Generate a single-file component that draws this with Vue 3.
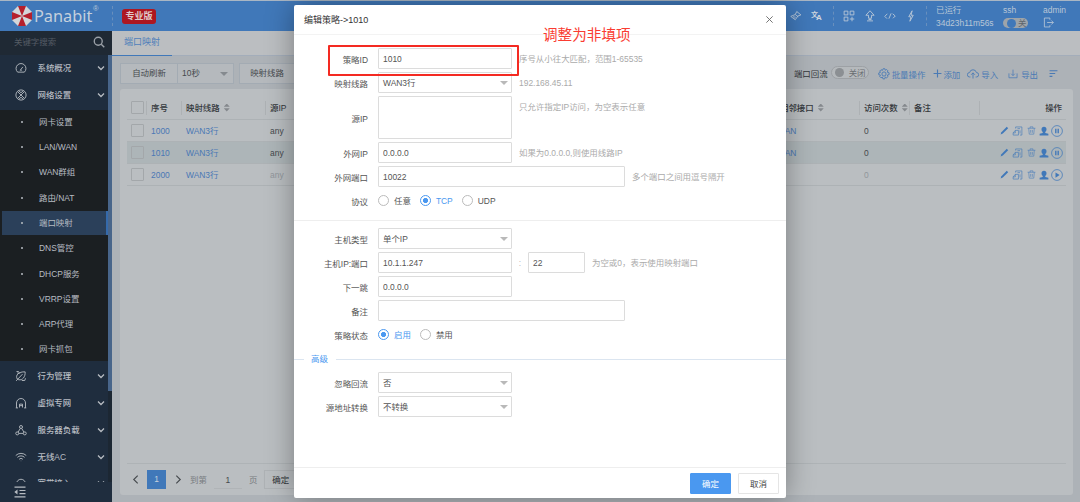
<script setup>
import {ref, reactive} from 'vue';

// 16x16 outline icons
const icons = {
  gauge: 'M3.5 13.5h9A6.6 6.6 0 1 0 3.5 13.5zM7 11l3.5-4.5M7 11h2',
  network: 'M8 1.2a6.8 6.8 0 1 0 0 13.6A6.8 6.8 0 0 0 8 1.2zM3.5 3.5l9 9M12.5 3.500l-9 9M5 2.300L8 5l3-2.700M5 13.700L8 11l3 2.700',
  behavior: 'M3 12C0 7 5 2 13.5 2.5C14 9 10 14 5 13zM1.5 14.5L10 5.5M3 4h4M2 2h3M9 14h4l1-3',
  vpn: 'M2 14.5V8a6 6 0 0 1 12 0v6.5M1 14.5h3M12 14.5h3M6 14V9.5h4V14M6 11.5h4',
  load: 'M8 2a2 2 0 1 0 0 4a2 2 0 0 0 0-4zM3 10.5a2 2 0 1 0 0 4a2 2 0 0 0 0-4zM13 10.5a2 2 0 1 0 0 4a2 2 0 0 0 0-4zM7 6l-3 5M9 6l3 5M5 12.5h6',
  wifi: 'M1 6a10 10 0 0 1 14 0M3.2 8.5a6.8 6.8 0 0 1 9.6 0M5.5 11a3.5 3.5 0 0 1 5 0M8 13v.5',
  access: 'M2 9a6 6 0 0 1 12 0M2 9v4h2V9zM14 9v4h-2V9z',
  clean: 'M9 2l5.5 4.5-4 1.5L7 13 1 8.5 7 6zM7 6l4 3M4 9.5l2-1M5.5 11l2-1.5',
  apps: 'M1.5 1.5h5v5h-5zM9.5 1.5h5v5h-5zM1.5 9.5h5v5h-5zM12 9v6M9 12h6',
  upload: 'M8 1L2.5 7H6v4h4V7h3.5zM4 14.5h8M6 12.7h4',
  code: 'M4.5 5L1 8.5l3 3M11.5 5L15 8l-3 3M6.5 11.5L9.5 4.5',
  bolt: 'M9.5 1L5 9h3l-1.5 6L11 7H8z',
  logout: 'M10 4V1.5H2v13h8V12M6 8h9M12 5l3 3-3 3',
  gear: 'M8 5.2a2.8 2.8 0 1 0 0 5.6a2.8 2.8 0 0 0 0-5.6zM6.8 1h2.4l.5 2 1.8-1 1.8 1.8-1 1.8 2.5.8v2.4l-2.4.7 1 1.8-1.8 1.8-1.9-1-.7 2.4H6.6l-.7-2.4-1.9 1-1.7-1.8 1-1.8L1 9V6.6l2.3-.8-1-1.8L4 2.3l1.9.9z',
  plus: 'M8 1v14M1 8h14',
  cloud: 'M4.5 12H3.5a3 3 0 0 1 0-6a4.6 4.6 0 0 1 9 0a3 3 0 0 1 0 6h-1M8 14V6.5M5.5 9L8 6.5 10.5 9',
  download: 'M1.5 7v7h13V7M8 1v9.5M5 7.5l3 3 3-3',
  sort: 'M1 3h14M1 8h10M1 13h5',
  copy: 'M5 4V1.5h10v13h-3M1 14.5h8.500V7H4.500L1 11zM4.5 7v4H1M8 4.200h4M12 7v5',
  trash: 'M1 4h14M5.5 4V1.5h5V4M3 4l1 10.5h8L13 4M6.5 7v5M9.5 7v5',
};

const topIcons = ['apps', 'upload', 'code', 'bolt'];

const mainMenu = [
  {name: '系统概况', icon: 'gauge'},
  {name: '网络设置', icon: 'network'},
];
const subMenu = ['网卡设置', 'LAN/WAN', 'WAN群组', '路由/NAT', '端口映射', 'DNS管控', 'DHCP服务', 'VRRP设置', 'ARP代理', '网卡抓包'];
const restMenu = [
  {name: '行为管理', icon: 'behavior'},
  {name: '虚拟专网', icon: 'vpn'},
  {name: '服务器负载', icon: 'load'},
  {name: '无线AC', icon: 'wifi'},
  {name: '宽带接入', icon: 'access'},
];
const activeMenu = ref('端口映射');

const tools = [
  {name: '批量操作', icon: 'gear'},
  {name: '添加', icon: 'plus'},
  {name: '导入', icon: 'cloud'},
  {name: '导出', icon: 'download'},
];

const rows = ref([
  {id: 1000, line: 'WAN3行', src: 'any', port: 'LAN', count: 0, enabled: true},
  {id: 1010, line: 'WAN3行', src: 'any', port: 'LAN', count: 0, enabled: true},
  {id: 2000, line: 'WAN3行', src: 'any', port: '', count: 0, enabled: false},
]);

const form = reactive({
  id: '1010',
  line: 'WAN3行',
  srcIp: '',
  wanIp: '0.0.0.0',
  wanPort: '10022',
  protocol: 'TCP',
  hostType: '单个IP',
  hostIp: '10.1.1.247',
  hostPort: '22',
  nextHop: '0.0.0.0',
  remark: '',
  state: '启用',
  ignore: '否',
  snat: '不转换',
});

const showModal = ref(true);
const closeModal = () => {
  showModal.value = false;
};
</script>

<template>
  <div class="page">
    <header class="header">
      <div class="brand">
        <svg class="logo" viewBox="0 0 20 20">
          <path fill="#d3d6d9" d="M6 0h8l6 6v8l-6 6H6l-6-6V6z"/>
          <path fill="#b5202c" d="M6 0h8l-4 10zM20 6v8l-10-4zM14 20H6l4-10zM0 14V6l10 4z"/>
        </svg>
        <span class="brand-name">Panabit</span>
        <span class="reg">®</span>
      </div>
      <span class="edition">专业版</span>
      <div class="header-right">
        <svg class="ico clean" viewBox="0 0 16 16"><path :d="icons.clean"/></svg>
        <span class="translate"><b>文</b><b class="letter">A</b></span>
        <div class="top-icons">
          <svg v-for="name in topIcons" :key="name" class="ico" viewBox="0 0 16 16"><path :d="icons[name]"/></svg>
        </div>
        <div class="uptime">
          <span>已运行</span>
          <span>34d23h11m56s</span>
        </div>
        <div class="ssh">
          <span>ssh</span>
          <span class="mini-switch"><i></i>关</span>
        </div>
        <div class="user">
          <span>admin</span>
          <svg class="ico" viewBox="0 0 16 16"><path :d="icons.logout"/></svg>
        </div>
      </div>
    </header>

    <div class="body">
      <aside class="sidebar">
        <div class="search">
          <span>关键字搜索</span>
          <svg viewBox="0 0 16 16"><circle cx="7" cy="7" r="5.3"/><path d="M11 11l4 4"/></svg>
        </div>
        <div class="menu-wrap">
          <nav class="menu">
            <div class="menu-item" v-for="item in mainMenu" :key="item.name">
              <svg class="ico" viewBox="0 0 16 16"><path :d="icons[item.icon]"/></svg>
              <span>{{ item.name }}</span>
              <svg class="chevron" viewBox="0 0 8 8"><path d="M1 2.5l3 3 3-3"/></svg>
            </div>
            <div class="submenu">
              <div v-for="name in subMenu"
                   :key="name"
                   :class="['sub-item', {active: name === activeMenu}]"
                   @click="activeMenu = name">
                <i></i>{{ name }}
              </div>
            </div>
            <div class="menu-item" v-for="item in restMenu" :key="item.name">
              <svg class="ico" viewBox="0 0 16 16"><path :d="icons[item.icon]"/></svg>
              <span>{{ item.name }}</span>
              <svg class="chevron" viewBox="0 0 8 8"><path d="M1 2.5l3 3 3-3"/></svg>
            </div>
          </nav>
          <div class="scrollbar"><div class="thumb"></div></div>
        </div>
        <div class="collapse">
          <svg viewBox="0 0 12 12"><path d="M.5 1.2h11M5.5 4.5h6M5.5 7.6h6M.5 10.8h11"/><path class="solid" d="M3.5 3.5v5L.3 6z"/></svg>
        </div>
      </aside>

      <main class="content">
        <div class="tabs"><div class="tab">端口映射</div></div>
        <div class="toolbar">
          <div class="group">
            <span class="cell">自动刷新</span>
            <span class="cell pick">10秒<i class="caret"></i></span>
          </div>
          <div class="group line-group"><span class="cell">映射线路</span></div>
          <div class="tools">
            <span class="dark">端口回流</span>
            <span class="switch"><i></i>关闭</span>
            <span v-for="tool in tools" :key="tool.name" :class="['tool', tool.icon]">
              <svg class="ico" viewBox="0 0 16 16"><path :d="icons[tool.icon]"/></svg>{{ tool.name }}
            </span>
            <svg class="ico sort-ico" viewBox="0 0 16 16"><path :d="icons.sort"/></svg>
          </div>
        </div>

        <div class="card">
          <div class="table">
            <div class="tr th">
              <span><i class="check"></i></span>
              <span>序号</span>
              <span>映射线路<i class="sorter"></i></span>
              <span>源IP</span>
              <span>相邻接口<i class="sorter"></i></span>
              <span>访问次数<i class="sorter"></i></span>
              <span>备注</span>
              <span class="right">操作</span>
            </div>
            <div v-for="row in rows" :key="row.id" :class="['tr', {current: row.id === 1010, off: !row.enabled}]">
              <span><i class="check"></i></span>
              <span class="link">{{ row.id }}</span>
              <span class="link">{{ row.line }}</span>
              <span>{{ row.src }}</span>
              <span class="link">{{ row.port }}</span>
              <span>{{ row.count }}</span>
              <span></span>
              <span class="actions">
                <svg class="fill" viewBox="0 0 16 16"><path d="M1 15l1.5-4L12 1.5 14.5 4 5 13.5z"/></svg>
                <svg class="thin copy" viewBox="0 0 16 16"><path :d="icons.copy"/></svg>
                <svg class="thin" viewBox="0 0 16 16"><path :d="icons.trash"/></svg>
                <svg class="fill person" viewBox="0 0 16 16"><path d="M8 1a4 4 0 0 1 4 4c0 2-1 3.5-2 4.5V11l5 1.5V15H1v-2.5L6 11V9.5C5 8.5 4 7 4 5a4 4 0 0 1 4-4z"/></svg>
                <svg class="round" viewBox="0 0 16 16">
                  <circle cx="8" cy="8" r="7.2"/>
                  <path v-if="row.enabled" d="M5.5 5h1.8v6H5.5zM8.7 5h1.8v6H8.7z"/>
                  <path v-else d="M6 4.5L11.5 8 6 11.5z"/>
                </svg>
              </span>
            </div>
          </div>
          <div class="pager">
            <svg class="arrow" viewBox="0 0 8 12"><path d="M6.5 1.5L2 6l4.5 4.5"/></svg>
            <span class="num">1</span>
            <svg class="arrow" viewBox="0 0 8 12"><path d="M1.5 1.5L6 6l-4.5 4.5"/></svg>
            <span class="muted goto">到第</span>
            <span class="page-input">1</span>
            <span class="muted">页</span>
            <span class="page-ok">确定</span>
          </div>
        </div>
      </main>
    </div>

    <div class="modal" v-if="showModal">
      <div class="modal-head">
        <span>编辑策略-&gt;1010</span>
        <svg viewBox="0 0 10 10" @click="closeModal"><path d="M1.5 1.5l7 7M8.5 1.5l-7 7"/></svg>
      </div>
      <div class="form">
        <div class="row">
          <label>策略ID</label>
          <input type="text" v-model="form.id"/>
          <span class="hint">序号从小往大匹配，范围1-65535</span>
        </div>
        <div class="row">
          <label>映射线路</label>
          <div class="select">{{ form.line }}<i class="caret"></i></div>
          <span class="hint">192.168.45.11</span>
        </div>
        <div class="row tall">
          <label>源IP</label>
          <textarea v-model="form.srcIp"></textarea>
          <span class="hint">只允许指定IP访问，为空表示任意</span>
        </div>
        <div class="row">
          <label>外网IP</label>
          <input type="text" v-model="form.wanIp"/>
          <span class="hint">如果为0.0.0.0,则使用线路IP</span>
        </div>
        <div class="row">
          <label>外网端口</label>
          <input class="wide" type="text" v-model="form.wanPort"/>
          <span class="hint">多个端口之间用逗号隔开</span>
        </div>
        <div class="row">
          <label>协议</label>
          <span v-for="p in ['任意', 'TCP', 'UDP']"
                :key="p"
                :class="['radio', {on: form.protocol === p}]"
                @click="form.protocol = p"><i></i>{{ p }}</span>
        </div>
        <div class="divider"></div>
        <div class="row">
          <label>主机类型</label>
          <div class="select">{{ form.hostType }}<i class="caret"></i></div>
        </div>
        <div class="row">
          <label>主机IP:端口</label>
          <input type="text" v-model="form.hostIp"/>
          <span class="colon">:</span>
          <input class="short" type="text" v-model="form.hostPort"/>
          <span class="hint">为空或0，表示使用映射端口</span>
        </div>
        <div class="row">
          <label>下一跳</label>
          <input type="text" v-model="form.nextHop"/>
        </div>
        <div class="row">
          <label>备注</label>
          <input class="wide" type="text" v-model="form.remark"/>
        </div>
        <div class="row">
          <label>策略状态</label>
          <span v-for="s in ['启用', '禁用']"
                :key="s"
                :class="['radio', {on: form.state === s}]"
                @click="form.state = s"><i></i>{{ s }}</span>
        </div>
        <div class="legend"><span>高级</span></div>
        <div class="row">
          <label>忽略回流</label>
          <div class="select">{{ form.ignore }}<i class="caret"></i></div>
        </div>
        <div class="row">
          <label>源地址转换</label>
          <div class="select">{{ form.snat }}<i class="caret"></i></div>
        </div>
      </div>
      <div class="modal-foot">
        <button type="button" class="btn primary" @click="closeModal">确定</button>
        <button type="button" class="btn" @click="closeModal">取消</button>
      </div>
      <div class="mark-box"></div>
      <div class="mark-text">调整为非填项</div>
    </div>
  </div>
</template>

<style>
  body {
    overflow: hidden;
  }
</style>

<style scoped>
  .page, .page * {
    box-sizing: border-box;
  }

  .page {
    position: relative;
    display: flex;
    flex-direction: column;
    width: 1080px;
    height: 502px;
    overflow: hidden;
    background: #adb2b7;
    font-family: "Liberation Sans", "Noto Sans CJK SC", sans-serif;
    font-size: 8.45px;
    line-height: 12px;
    color: #45494d;
    white-space: nowrap;
  }

  svg {
    display: block;
    flex: none;
    fill: none;
    stroke: currentColor;
  }

  i {
    display: block;
    flex: none;
  }

  .ico {
    width: 12px;
    height: 12px;
    stroke-width: 1.2;
  }

  .header {
    display: flex;
    align-items: center;
    flex: none;
    height: 31px;
    border-top: 1px solid #a9b6c4;
    background: #4078b9;
    color: #b9c7d7;
  }

  .brand {
    display: flex;
    align-items: center;
    width: 113px;
    height: 20px;
    padding-left: 12px;
    border-right: 1px dashed #688fbd;
  }

  .logo {
    width: 20px;
    height: 20px;
    stroke: none;
  }

  .brand-name {
    margin-left: 2px;
    width: 59px;
    font-family: "Noto Sans", sans-serif;
    font-size: 16.3px;
    line-height: 20px;
    color: #c5d0dd;
  }

  .reg {
    margin-bottom: 14px;
    font-size: 7.5px;
  }

  .edition {
    margin-left: 9px;
    width: 34px;
    height: 15px;
    border-radius: 3px;
    background: #ad1721;
    color: #e0c9cb;
    font-size: 9px;
    font-weight: bold;
    line-height: 14px;
    text-align: center;
  }

  .header-right {
    display: flex;
    align-items: center;
    margin-left: auto;
    height: 28px;
  }

  .clean {
    margin-right: 9px;
  }

  .translate {
    display: flex;
    width: 22px;
    line-height: 10px;
    color: #d0d7df;
    font-size: 7px;
  }

  .letter {
    margin: 3px 0 0 -2px;
    font-size: 8px;
  }

  .top-icons {
    display: flex;
    align-items: center;
    gap: 8.7px;
    width: 94px;
    height: 20px;
    padding-left: 9px;
    border-left: 1px dashed #688fbd;
    border-right: 1px dashed #688fbd;
  }

  .uptime, .ssh, .user {
    display: flex;
    flex-direction: column;
    gap: 1px;
  }

  .uptime {
    width: 76px;
    padding-left: 9px;
  }

  .ssh {
    width: 40px;
  }

  .user {
    width: 37px;
  }

  .user .ico {
    width: 11px;
    height: 11px;
  }

  .mini-switch {
    display: flex;
    align-items: center;
    gap: 2px;
    width: 25px;
    height: 10px;
    margin-top: 1px;
    padding-left: 4px;
    border-radius: 5px;
    background: #9da4aa;
    color: #5e656c;
  }

  .mini-switch i {
    width: 9px;
    height: 9px;
    border-radius: 50%;
    background: #4078b9;
  }

  .body {
    display: flex;
    flex: 1;
    min-height: 0;
  }

  .sidebar {
    display: flex;
    flex-direction: column;
    width: 112px;
    background: #1f2d3e;
    color: #b7bcc2;
  }

  .search {
    display: flex;
    align-items: center;
    justify-content: space-between;
    flex: none;
    height: 24px;
    padding: 0 7px 2px 14px;
    background: #1f2934;
    color: #555c64;
  }

  .search svg {
    width: 12px;
    height: 12px;
    color: #9ba1a8;
    stroke-width: 1.8;
  }

  .menu-wrap {
    display: flex;
    flex: 1;
    min-height: 0;
    overflow: hidden;
  }

  .menu {
    width: 108px;
  }

  .menu-item {
    display: flex;
    align-items: center;
    height: 26.7px;
    padding-left: 15px;
  }

  .menu-item span {
    width: 59px;
    margin-left: 10.5px;
    font-weight: 500;
  }

  .chevron {
    width: 8px;
    height: 8px;
    stroke-width: 1.3;
  }

  .submenu {
    display: flex;
    flex-direction: column;
    gap: 1.8px;
    margin: 1.6px 0 2px;
    background: #1b1f22;
  }

  .sub-item {
    display: flex;
    align-items: center;
    height: 23.5px;
    margin-left: 2px;
    padding-left: 19px;
  }

  .sub-item i {
    width: 2px;
    height: 2px;
    margin-right: 16px;
    border-radius: 50%;
    background: #b7bcc2;
  }

  .sub-item.active {
    border-right: 2px solid #356aab;
    background: #2b405a;
  }

  .scrollbar {
    width: 4px;
    background: #1c2733;
  }

  .thumb {
    height: 336px;
    background: #48658a;
  }

  .collapse {
    flex: none;
    height: 20px;
    padding: 4px 14px;
  }

  .collapse svg {
    width: 12px;
    height: 12px;
    stroke-width: 1.2;
  }

  .collapse .solid {
    fill: currentColor;
    stroke: none;
  }

  .content {
    display: flex;
    flex-direction: column;
    flex: 1;
    min-width: 0;
  }

  .tabs {
    flex: none;
    height: 25px;
    border-bottom: 1px solid #a3adba;
    background: #bbbec1;
  }

  .tab {
    width: 60px;
    height: 25px;
    padding-left: 12px;
    border-bottom: 1px solid #4078b9;
    color: #4f7fba;
    font-size: 9px;
    line-height: 23px;
  }

  .toolbar {
    display: flex;
    align-items: center;
    flex: none;
    gap: 6px;
    height: 33px;
    padding: 2px 22px 0 8px;
  }

  .group {
    display: flex;
    height: 21px;
    border: 1px solid #a3abb3;
    background: #b5b9bd;
  }

  .cell {
    width: 56px;
    line-height: 19px;
    text-align: center;
  }

  .line-group {
    margin-left: -1px;
  }

  .line-group .cell {
    width: 54px;
  }

  .cell + .cell {
    border-left: 1px solid #a3abb3;
  }

  .pick {
    display: flex;
    align-items: center;
    justify-content: space-between;
    padding: 0 5px 0 4px;
  }

  .caret {
    width: 0;
    height: 0;
    border: 4px solid transparent;
    border-top-color: #858a8f;
    border-bottom: 0;
  }

  .tools {
    display: flex;
    align-items: center;
    margin-left: auto;
    color: #4a7ab5;
  }

  .dark {
    color: #33373b;
  }

  .switch {
    display: flex;
    align-items: center;
    gap: 5px;
    width: 38px;
    height: 13px;
    margin: -2px 9px 0 3px;
    padding-left: 3px;
    border: 1px solid #9da1a5;
    border-radius: 7px;
    background: #b5b9bc;
    color: #6a6e72;
  }

  .switch i {
    width: 9px;
    height: 9px;
    border-radius: 50%;
    background: #8b8f93;
  }

  .tool {
    display: flex;
    align-items: center;
    gap: 2px;
    margin-right: 8px;
    padding-top: 2px;
  }

  .tool .ico {
    margin-top: -2px;
  }

  .plus .ico {
    width: 9px;
    height: 9px;
    margin-right: -1px;
    stroke-width: 2;
  }

  .plus {
    margin-right: 7px;
  }

  .cloud {
    margin-right: 10px;
  }

  .download .ico {
    width: 10px;
    height: 10px;
    margin-right: 1px;
  }

  .download {
    margin-right: 11px;
  }

  .sort-ico {
    width: 9px;
    height: 9px;
    stroke-width: 2;
  }

  .card {
    display: flex;
    flex-direction: column;
    flex: 1;
    margin: 0 7px 7px 8px;
    padding: 7px 7px 0;
    border-radius: 3px;
    background: #babec1;
  }

  .table {
    flex: 1;
  }

  .tr {
    display: grid;
    grid-template-columns: 20px 35px 84px 510px 84px 50px 70px 86px;
    align-items: center;
    height: 22px;
    border-bottom: 1px solid #adb2b5;
  }

  .tr > span {
    display: flex;
    align-items: center;
    padding-left: 4px;
  }

  .th {
    height: 24px;
    color: #33373b;
    font-weight: 500;
  }

  .th > span {
    height: 14px;
    margin-left: -1px;
    padding-left: 4px;
    border-left: 1px solid #adb1b4;
  }

  .th > span:first-child {
    margin-left: 0;
    border: 0;
  }

  .th > .right {
    justify-content: flex-end;
    padding-right: 4px;
  }

  .current {
    background: #adb5b8;
  }

  .off {
    color: #91969b;
  }

  .link {
    color: #4a78b5;
  }

  .check {
    width: 13px;
    height: 13px;
    border: 1px solid #a3a7aa;
    border-radius: 1px;
  }

  .sorter {
    margin-left: 4px;
    width: 6px;
    height: 8px;
    background: #85898d;
    clip-path: polygon(50% 0, 100% 40%, 0 40%, 0 60%, 100% 60%, 50% 100%, 0 60%, 0 40%);
  }

  .tr > .actions {
    gap: 3.5px;
    justify-content: flex-end;
    padding: 0 3px 0 0;
    color: #4078b9;
  }

  .actions svg {
    width: 9px;
    height: 9px;
  }

  .actions .fill {
    fill: currentColor;
    stroke: none;
  }

  .actions .copy {
    width: 11px;
    height: 10px;
  }

  .actions .person {
    width: 10px;
    height: 10px;
  }

  .actions .round {
    width: 12px;
    height: 12px;
    margin-left: -1.5px;
  }

  .round path {
    fill: currentColor;
    stroke: none;
  }

  .pager {
    display: flex;
    align-items: center;
    height: 32px;
    padding-left: 5px;
    border-top: 1px solid #aeb3b6;
  }

  .arrow {
    width: 7px;
    height: 11px;
    stroke-width: 1.3;
  }

  .num {
    width: 19px;
    height: 19px;
    margin: 0 9px 0 8px;
    background: #4078b9;
    color: #c5d0dd;
    line-height: 19px;
    text-align: center;
  }

  .muted {
    color: #777b7f;
  }

  .goto {
    margin-left: 8px;
  }

  .page-input {
    width: 28px;
    height: 18px;
    margin: 0 7px;
    border-bottom: 1px solid #b0b4b7;
    line-height: 18px;
    text-align: center;
  }

  .page-ok {
    width: 36px;
    height: 19px;
    margin-left: 7px;
    padding-left: 7px;
    border: 1px solid #aeb2b5;
    color: #2d3135;
    line-height: 18px;
  }

  .modal {
    position: absolute;
    left: 294px;
    top: 5px;
    display: flex;
    flex-direction: column;
    width: 492px;
    height: 493px;
    border-radius: 2px;
    background: #fff;
    box-shadow: 0 0 28px rgba(0, 0, 0, 0.35);
    color: #555;
  }

  .modal-head {
    display: flex;
    align-items: center;
    justify-content: space-between;
    height: 30px;
    padding: 0 12px 0 10px;
    border-bottom: 1px solid #f3f3f3;
    font-size: 9px;
    color: #333;
  }

  .modal-head svg {
    width: 9px;
    height: 9px;
    color: #666;
  }

  .form {
    display: flex;
    flex-direction: column;
    gap: 3px;
    flex: 1;
    padding-top: 13px;
  }

  .row {
    display: flex;
    align-items: center;
    height: 21px;
  }

  .row label {
    width: 74px;
    margin-right: 10px;
    padding-top: 3px;
    text-align: right;
  }

  input, textarea, .select {
    width: 134px;
    height: 21px;
    margin: 0;
    padding: 0 4px;
    border: 1px solid #dcdcdc;
    border-radius: 1px;
    outline: none;
    background: #fff;
    color: #555;
    font: inherit;
    resize: none;
  }

  .select {
    display: flex;
    align-items: center;
    justify-content: space-between;
    padding-right: 3px;
  }

  .select .caret {
    border-top-color: #b9b9b9;
  }

  .wide {
    width: 247px;
  }

  .short {
    width: 57px;
  }

  .tall {
    height: 43px;
  }

  .tall textarea {
    height: 43px;
  }

  .tall .hint {
    align-self: flex-start;
    margin-top: 5px;
  }

  .hint {
    margin-left: 7px;
    color: #aaa;
  }

  .colon {
    width: 16px;
    text-align: center;
    color: #bbb;
  }

  .radio {
    display: flex;
    align-items: center;
    gap: 5px;
    margin-right: 9px;
  }

  .radio i {
    width: 11px;
    height: 11px;
    border: 1px solid #bbb;
    border-radius: 50%;
  }

  .radio.on {
    color: #4a98f0;
  }

  .radio.on i {
    border-color: #4a98f0;
    background: radial-gradient(circle, #4a98f0 2.2px, #fff 2.9px);
  }

  .divider {
    height: 1px;
    margin: 6px 0 4px;
    background: #eee;
  }

  .legend {
    display: flex;
    align-items: center;
    height: 12px;
    margin: 5px 0 4px;
    color: #4a98f0;
  }

  .legend::before, .legend::after {
    content: "";
    width: 10px;
    height: 1px;
    background: #dbe5f0;
  }

  .legend::after {
    flex: 1;
  }

  .legend span {
    padding: 0 8px 0 7px;
  }

  .modal-foot {
    display: flex;
    justify-content: flex-end;
    gap: 7px;
    height: 31px;
    padding: 5px 7px;
    border-top: 1px solid #eee;
  }

  .btn {
    width: 41px;
    height: 21px;
    padding: 0;
    border: 1px solid #e5e5e5;
    border-radius: 1px;
    background: #fff;
    color: #444;
    font: inherit;
    cursor: pointer;
  }

  .btn.primary {
    border-color: #4a98f0;
    background: #4a98f0;
    color: #fff;
  }

  .mark-box {
    position: absolute;
    left: 34px;
    top: 40px;
    width: 191px;
    height: 31px;
    border: 2px solid #f42a22;
    border-radius: 1px;
  }

  .mark-text {
    position: absolute;
    left: 249px;
    top: 20px;
    color: #fa3c32;
    font-size: 14.6px;
    line-height: 20px;
  }
</style>
